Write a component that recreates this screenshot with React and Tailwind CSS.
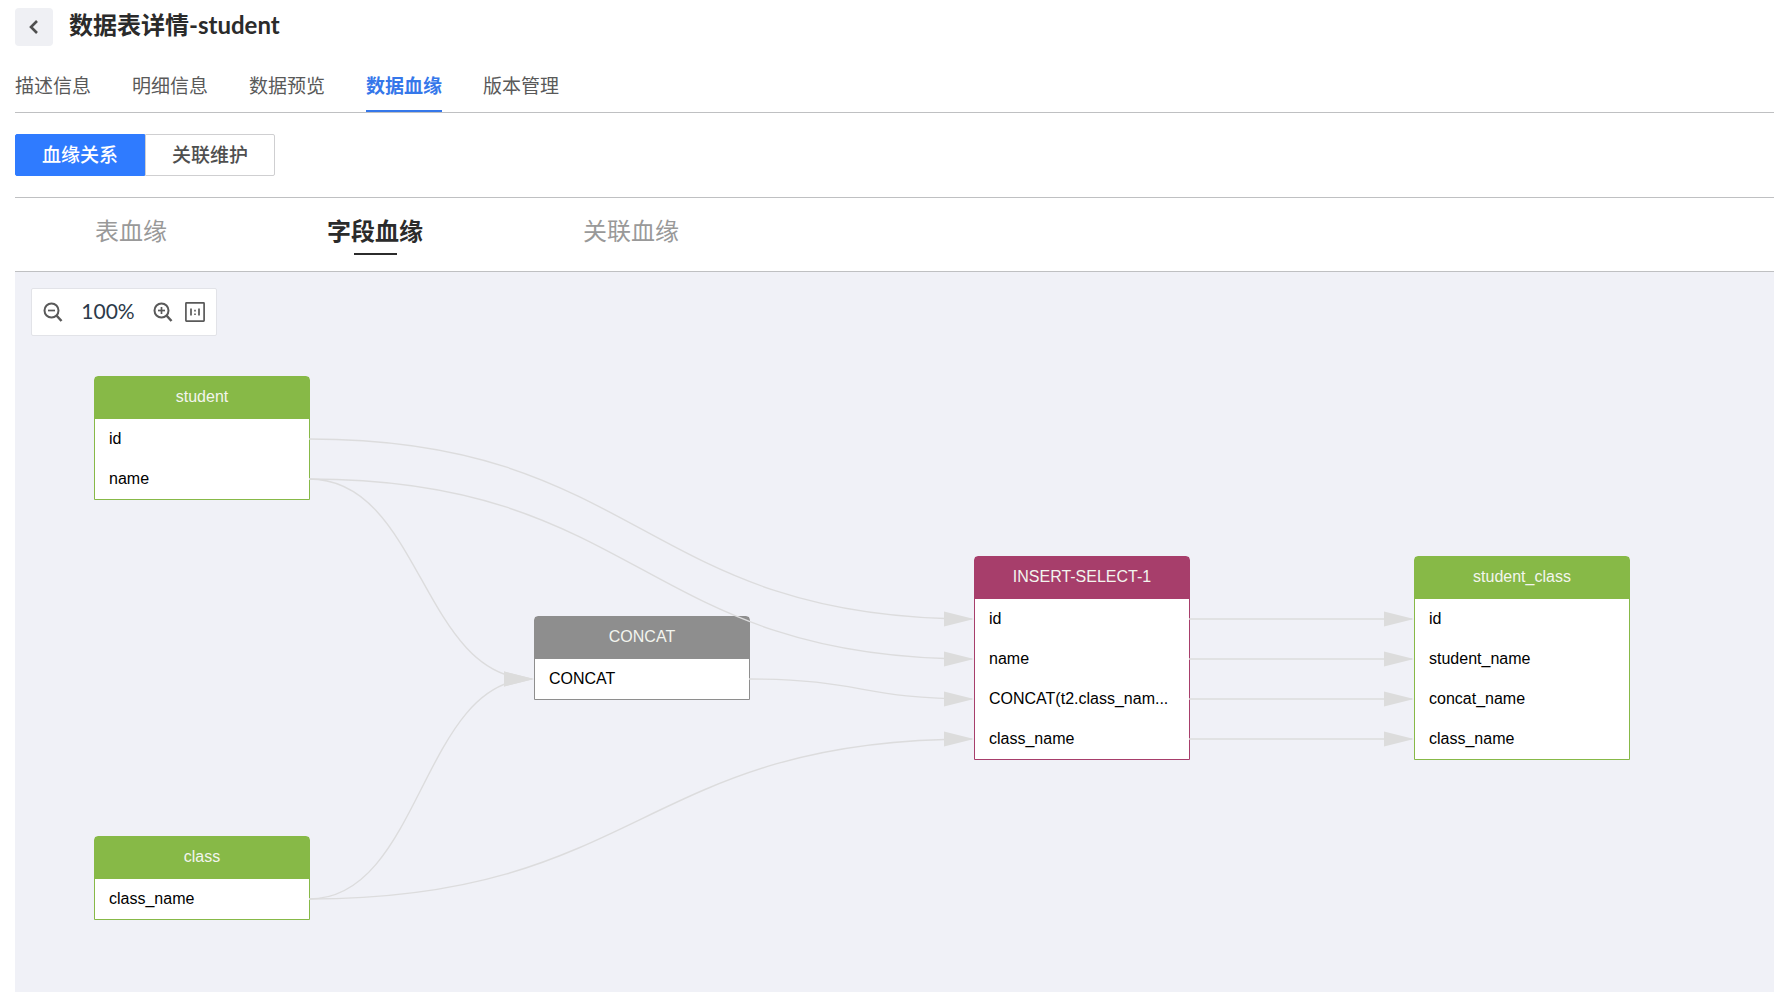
import React, { useState } from "react";
import clsx from "clsx";

const pageTabs = ["描述信息", "明细信息", "数据预览", "数据血缘", "版本管理"];
const modes = ["血缘关系", "关联维护"];
const lineageTabs = ["表血缘", "字段血缘", "关联血缘"];

const NODE_WIDTH = 216;
const FIRST_ROW = 63;
const ROW_HEIGHT = 40;

const nodeStyles = {
  table: { border: "border-[#87b947]", header: "bg-[#87b947]" },
  func: { border: "border-[#8e8e8e]", header: "bg-[#8e8e8e]" },
  select: { border: "border-[#a73e6b]", header: "bg-[#a73e6b]" },
};

const nodes = [
  { id: "student", title: "student", type: "table", x: 79, y: 104, fields: ["id", "name"] },
  { id: "class", title: "class", type: "table", x: 79, y: 564, fields: ["class_name"] },
  { id: "concat", title: "CONCAT", type: "func", x: 519, y: 344, fields: ["CONCAT"] },
  {
    id: "insert",
    title: "INSERT-SELECT-1",
    type: "select",
    x: 959,
    y: 284,
    fields: ["id", "name", "CONCAT(t2.class_nam...", "class_name"],
  },
  {
    id: "target",
    title: "student_class",
    type: "table",
    x: 1399,
    y: 284,
    fields: ["id", "student_name", "concat_name", "class_name"],
  },
];

// [source node, source row, target node, target row]
const edges = [
  ["student", 0, "insert", 0],
  ["student", 1, "insert", 1],
  ["student", 1, "concat", 0],
  ["class", 0, "concat", 0],
  ["class", 0, "insert", 3],
  ["concat", 0, "insert", 2],
  ["insert", 0, "target", 0],
  ["insert", 1, "target", 1],
  ["insert", 2, "target", 2],
  ["insert", 3, "target", 3],
];

const findNode = (id) => nodes.find((node) => node.id === id);

const Edge = ({ edge }) => {
  const [sourceId, sourceRow, targetId, targetRow] = edge;
  const source = findNode(sourceId);
  const target = findNode(targetId);
  const x1 = source.x + NODE_WIDTH - 1;
  const y1 = source.y + FIRST_ROW + sourceRow * ROW_HEIGHT;
  const x2 = target.x;
  const y2 = target.y + FIRST_ROW + targetRow * ROW_HEIGHT;
  const mid = (x1 + x2) / 2;

  return (
    <g>
      <path d={`M${x1} ${y1} C${mid} ${y1} ${mid} ${y2} ${x2 - 2} ${y2}`} fill="none" stroke="#dcdcdd" strokeWidth="1.4" />
      <path d={`M${x2} ${y2} L${x2 - 30} ${y2 - 7.5} V${y2 + 7.5} Z`} fill="#dcdcdc" />
    </g>
  );
};

const LineageNode = ({ node }) => {
  const style = nodeStyles[node.type];

  return (
    <div
      className={clsx("absolute w-[216px] rounded-t-sm border bg-white text-base", style.border)}
      style={{ left: node.x, top: node.y }}
    >
      <div className={clsx("flex h-[42px] items-center justify-center pb-0.5 text-[#f3f5ee]", style.header)}>
        {node.title}
      </div>
      <ul>
        {node.fields.map((field) => (
          <li key={field} className="flex h-10 items-center px-3.5 whitespace-nowrap text-black">
            {field}
          </li>
        ))}
      </ul>
    </div>
  );
};

const ZoomIcon = ({ plus }) => (
  <svg width="20" height="20" viewBox="0 0 20 20" fill="none" stroke="#595959">
    <circle cx="8.5" cy="8.5" r="7" strokeWidth="2" />
    <path d="M5 8.5h7" strokeWidth="1.7" />
    {plus && <path d="M8.5 5v7" strokeWidth="1.7" />}
    <path d="M13.5 13.5l5 5.5" strokeWidth="2.5" />
  </svg>
);

const ActualSizeIcon = () => (
  <svg width="20" height="20" viewBox="0 0 20 20" fill="none" stroke="#595959">
    <rect x="0.9" y="0.9" width="18.2" height="18.2" rx="0.5" strokeWidth="1.7" />
    <path d="M6 6.5v7M14 6.5v7" strokeWidth="1.7" />
    <path d="M10 7.8v1.6M10 11.4v1.6" strokeWidth="1.6" />
  </svg>
);

const ZoomBar = () => {
  const [zoom, setZoom] = useState(100);

  return (
    <div className="absolute top-4 left-4 flex h-12 w-[186px] items-center rounded-xs border border-[#e2e3e8] bg-white pl-[11px]">
      <button type="button" aria-label="缩小" onClick={() => setZoom(Math.max(10, zoom - 10))}>
        <ZoomIcon />
      </button>
      <span className="w-[90px] pb-0.5 text-center font-['Lato','Noto_Sans_CJK_SC',sans-serif] text-[21px] leading-7 text-[#2c3a4a]">
        {zoom}%
      </span>
      <button type="button" aria-label="放大" onClick={() => setZoom(zoom + 10)}>
        <ZoomIcon plus />
      </button>
      <button type="button" aria-label="实际大小" className="ml-3" onClick={() => setZoom(100)}>
        <ActualSizeIcon />
      </button>
    </div>
  );
};

const App = () => {
  const [pageTab, setPageTab] = useState("数据血缘");
  const [mode, setMode] = useState("血缘关系");
  const [lineageTab, setLineageTab] = useState("字段血缘");

  return (
    <div className="flex min-h-screen flex-col bg-white pt-2 pl-[15px] font-['Lato','Noto_Sans_CJK_SC',sans-serif] text-[#595959]">
      {/* Title */}
      <header className="flex h-[38px] items-center gap-4">
        <button
          type="button"
          aria-label="返回"
          className="flex size-[38px] items-center justify-center rounded-sm bg-[#eff0f4]"
        >
          <svg width="10" height="14" viewBox="0 0 10 14" fill="none" stroke="#4f4f4f" strokeWidth="2.6">
            <path d="M8 1L2 7l6 6" />
          </svg>
        </button>
        <h1 className="pb-1 text-2xl leading-8 font-bold text-[#2b2b2b]">数据表详情-student</h1>
      </header>

      {/* Page tabs */}
      <nav className="mt-3 flex gap-[41px] border-b border-[#bfc0c2]">
        {pageTabs.map((tab) => (
          <button
            key={tab}
            type="button"
            onClick={() => setPageTab(tab)}
            className={clsx(
              "h-[54px] border-b-2 pt-1 text-[19px] leading-7",
              tab === pageTab ? "border-[#3577ea] font-bold text-[#3577ea]" : "border-transparent"
            )}
          >
            {tab}
          </button>
        ))}
      </nav>

      {/* Mode switch */}
      <div className="my-[21px] flex">
        {modes.map((item) => (
          <button
            key={item}
            type="button"
            onClick={() => setMode(item)}
            className={clsx(
              "h-[42px] w-[130px] border text-[19px] leading-7 font-medium first:rounded-l-xs last:rounded-r-xs",
              item === mode ? "border-[#2f7bff] bg-[#2f7bff] text-white" : "border-[#cfcfd1] text-[#4f4f4f]"
            )}
          >
            {item}
          </button>
        ))}
      </div>

      {/* Lineage tabs */}
      <div className="flex gap-[160px] border-y border-[#bfc0c2] px-20 pt-[15px] pb-4">
        {lineageTabs.map((tab) => (
          <button
            key={tab}
            type="button"
            onClick={() => setLineageTab(tab)}
            className={clsx(
              "flex flex-col items-center gap-1 text-2xl leading-9",
              tab === lineageTab ? "font-bold text-[#2b2b2b]" : "text-[#999999]"
            )}
          >
            {tab}
            <span className={clsx("h-[2px] w-[43px]", tab === lineageTab && "bg-[#2b2b2b]")}></span>
          </button>
        ))}
      </div>

      {/* Canvas */}
      <main className="relative flex-1 overflow-hidden bg-[#f0f1f7] font-['Liberation_Sans',Arial,sans-serif]">
        {nodes.map((node) => (
          <LineageNode key={node.id} node={node} />
        ))}
        <svg className="pointer-events-none absolute inset-0 size-full">
          {edges.map((edge) => (
            <Edge key={edge.join("-")} edge={edge} />
          ))}
        </svg>
        <ZoomBar />
      </main>
    </div>
  );
};

export default App;
